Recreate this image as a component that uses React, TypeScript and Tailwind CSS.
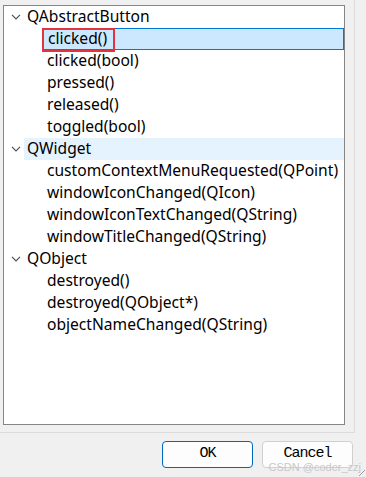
import React from "react"

type Item = { label: string; children: string[] }

const groups: Item[] = [
  {
    label: "QAbstractButton",
    children: ["clicked()", "clicked(bool)", "pressed()", "released()", "toggled(bool)"],
  },
  {
    label: "QWidget",
    children: [
      "customContextMenuRequested(QPoint)",
      "windowIconChanged(QIcon)",
      "windowIconTextChanged(QString)",
      "windowTitleChanged(QString)",
    ],
  },
  {
    label: "QObject",
    children: ["destroyed()", "destroyed(QObject*)", "objectNameChanged(QString)"],
  },
]

function Chevron() {
  return (
    <svg width="10" height="6" viewBox="0 0 10 6" className="shrink-0">
      <path d="M1 0.8 L5 4.8 L9 0.8" fill="none" stroke="#505050" strokeWidth="1.2" />
    </svg>
  )
}

export default function App() {
  return (
    <div
      className="relative h-[477px] w-[366px] overflow-hidden bg-[#f0f0f0] text-[#000]"
      style={{ fontFamily: '"Noto Sans", "Open Sans", sans-serif' }}
    >
      {/* Outer panel */}
      <div className="h-[433px] w-[355px] border-r border-b border-[#dcdcdc] pt-[5px] pl-[3px]">
        {/* Tree */}
        <div className="relative h-[420px] w-[342px] border border-[#858585] bg-white">
          {groups.map((g) => (
            <div key={g.label}>
              <div
                className={
                  "flex h-[22px] items-center " +
                  (g.label === "QWidget" ? "bg-[linear-gradient(to_right,transparent_20px,#e5f3ff_20px)]" : "")
                }
              >
                <div className="flex w-[20px] justify-center pl-[4px]">
                  <Chevron />
                </div>
                <span className="pl-[3px] text-[15.6px] leading-none">{g.label}</span>
              </div>
              {g.children.map((c) => {
                const selected = g.label === "QAbstractButton" && c === "clicked()"
                return (
                  <div key={c} className="flex h-[22px] items-stretch pl-[39px]">
                    <div
                      className={
                        "flex flex-1 items-center pl-[4px] " +
                        (selected ? "border border-[#0078d7] bg-[#cce8ff] pl-[3px]" : "")
                      }
                    >
                      <span className="text-[15.6px] leading-none whitespace-nowrap">{c}</span>
                    </div>
                  </div>
                )
              })}
            </div>
          ))}
          {/* red annotation box */}
          <div className="absolute top-[22px] left-[38px] h-[24px] w-[73px] border-2 border-[#e2343d]" />
        </div>
      </div>

      {/* Buttons */}
      <div className="flex justify-end gap-[9px] pt-[8px] pr-[13px]">
        <button
          className="flex h-[27px] w-[91px] items-center justify-center rounded-[4px] border border-[#0067c0] bg-[#fdfdfd] text-[15px] tracking-[-1px]"
          style={{ fontFamily: '"Liberation Mono", monospace' }}
        >
          OK
        </button>
        <button
          className="flex h-[27px] w-[91px] items-center justify-center rounded-[4px] border border-[#d0d0d0] bg-[#fdfdfd] text-[15px] tracking-[-1px]"
          style={{ fontFamily: '"Liberation Mono", monospace' }}
        >
          Cancel
        </button>
      </div>

      {/* watermark */}
      <div
        className="absolute right-[5px] bottom-[4px] text-[11px] leading-none text-[#c8c8c8]"
        style={{ fontFamily: '"Liberation Sans", sans-serif' }}
      >
        CSDN @coder_zzj
      </div>
      <svg width="6" height="6" className="absolute right-[1px] bottom-[1px]">
        <path d="M6 0 L0 6" stroke="#9a9a9a" strokeWidth="1" />
      </svg>
    </div>
  )
}
